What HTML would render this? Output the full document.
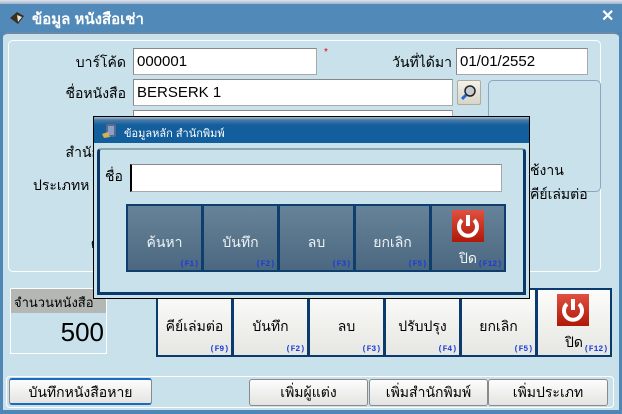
<!DOCTYPE html>
<html><head><meta charset="utf-8"><style>
*{box-sizing:border-box;margin:0;padding:0}
body{width:622px;height:414px;overflow:hidden;background:#4e86b6;font-family:"Liberation Sans","Noto Sans CJK SC","WenQuanYi Zen Hei",sans-serif;position:relative;font-size:14px;color:#000}
.a{position:absolute}
.inp{position:absolute;background:#fff;border:1px solid #a8a8a8;border-top-color:#888;border-left-color:#888;font-size:15px;padding:2px 3px;line-height:21px}
.lbl{position:absolute;font-size:14px;text-align:right}
.btn{position:absolute;background:linear-gradient(#fcfcfa,#e6e6e2);border:2px solid #0b3b6e;font-size:14px;text-align:center}
.fk{position:absolute;right:2px;bottom:1px;font-size:8px;font-weight:bold;color:#1a3cd8;font-family:"Liberation Mono",monospace}
.dbtn{position:absolute;top:204px;height:68px;background:linear-gradient(#668399,#4b6880);border:2px solid #0e3e6e;color:#eef3f6;text-align:center;font-size:14px}
.bb{position:absolute;top:379px;height:27px;background:linear-gradient(#fdfdfd,#e4e4e2);border:1px solid #8a8a8a;border-radius:3px;font-size:14px;text-align:center;line-height:25px}
</style></head><body>
<div class="a" style="left:0;top:0;width:622px;height:4px;background:linear-gradient(#dde4ee,#9fb4cc)"></div>
<div class="a" style="left:0;top:4px;width:622px;height:28px;background:#5189b9"></div>
<svg class="a" style="left:8px;top:10px" width="18" height="16"><path d="M2 8 L9 2 L16 6 L10 14 Z" fill="#3a3020"/><path d="M9 5 L14 7 L10 12 Z" fill="#e8e4d8"/></svg>
<div class="a" style="left:32px;top:7px;color:#fff;font-size:15px;font-weight:bold">ข้อมูล หนังสือเช่า</div>
<div class="a" style="left:601px;top:6px;color:#fff;font-size:16px;font-weight:bold">✕</div>
<div class="a" style="left:3px;top:32px;width:616px;height:378px;background:#c8e1ea;border-radius:5px 5px 0 0;border-top:2px solid #6a8aa8"></div>
<div class="a" style="left:8px;top:40px;width:593px;height:232px;border:1px solid #fff;border-radius:5px"></div>
<div class="lbl" style="left:40px;top:52px;width:86px">บาร์โค้ด</div>
<div class="inp" style="left:133px;top:48px;width:184px;height:27px">000001</div>
<div class="a" style="left:324px;top:47px;color:#e00;font-size:10px">*</div>
<div class="lbl" style="left:370px;top:52px;width:82px">วันที่ได้มา</div>
<div class="inp" style="left:456px;top:48px;width:132px;height:27px">01/01/2552</div>
<div class="lbl" style="left:40px;top:83px;width:86px">ชื่อหนังสือ</div>
<div class="inp" style="left:133px;top:79px;width:320px;height:27px">BERSERK 1</div>
<div class="a" style="left:457px;top:80px;width:24px;height:25px;background:linear-gradient(#f4f2ea,#d8d4c8);border:1px solid #b0ac9c;border-radius:2px"></div>
<svg class="a" style="left:460px;top:83px" width="18" height="18"><circle cx="10" cy="8" r="5" fill="#c8ccd0" stroke="#222" stroke-width="1.5"/><path d="M6 12 L2 16" stroke="#1a6adc" stroke-width="3"/></svg>
<div class="a" style="left:488px;top:80px;width:113px;height:112px;border:1px solid #8aa6c4;border-radius:5px"></div>
<div class="inp" style="left:133px;top:110px;width:320px;height:27px"></div>
<div class="lbl" style="left:30px;top:142px;width:70px">สำนัก</div>
<div class="lbl" style="left:10px;top:175px;width:90px;text-align:left;padding-left:23px;white-space:nowrap">ประเภทห</div>
<div class="lbl" style="left:80px;top:233px;width:20px">ค</div>
<div class="a" style="left:530px;top:160px;font-size:14px">ช้งาน</div>
<div class="a" style="left:530px;top:184px;font-size:14px">คีย์เล่มต่อ</div>
<div class="a" style="left:10px;top:288px;width:97px;height:66px;border:1px solid #fff;background:#c8e1ea"></div>
<div class="a" style="left:11px;top:289px;width:95px;height:24px;background:#b4b8b4;font-size:13px;padding:3px 3px;overflow:hidden;white-space:nowrap">จำนวนหนังสือ</div>
<div class="a" style="left:11px;top:314px;width:95px;height:40px;font-size:26px;text-align:right;padding-right:2px;line-height:36px">500</div>
<div class="btn" style="left:156px;top:288px;width:77px;height:69px;padding-top:26px">คีย์เล่มต่อ<span class="fk">(F9)</span></div>
<div class="btn" style="left:232px;top:288px;width:77px;height:69px;padding-top:26px">บันทึก<span class="fk">(F2)</span></div>
<div class="btn" style="left:308px;top:288px;width:77px;height:69px;padding-top:26px">ลบ<span class="fk">(F3)</span></div>
<div class="btn" style="left:384px;top:288px;width:77px;height:69px;padding-top:26px">ปรับปรุง<span class="fk">(F4)</span></div>
<div class="btn" style="left:460px;top:288px;width:77px;height:69px;padding-top:26px">ยกเลิก<span class="fk">(F5)</span></div>
<div class="btn" style="left:536px;top:288px;width:76px;height:69px;padding-top:42px">ปิด<span class="fk">(F12)</span>
<svg class="a" style="left:19px;top:4px" width="32" height="32"><defs><linearGradient id="r" x1="0" y1="0" x2="0" y2="1"><stop offset="0" stop-color="#e05040"/><stop offset="1" stop-color="#b01808"/></linearGradient></defs><rect width="32" height="32" fill="url(#r)"/><path d="M10 10 A9 9 0 1 0 22 10" fill="none" stroke="#fff" stroke-width="4"/><path d="M16 5 V16" stroke="#fff" stroke-width="4"/></svg></div>
<div class="a" style="left:6px;top:376px;width:608px;height:32px;border:1px solid #fff;border-radius:4px"></div>
<div class="bb" style="left:9px;top:378px;width:143px;border-top:2px solid #1a6ac0;border-bottom:2px solid #1a6ac0">บันทึกหนังสือหาย</div>
<div class="bb" style="left:249px;width:119px">เพิ่มผู้แต่ง</div>
<div class="bb" style="left:369px;width:119px">เพิ่มสำนักพิมพ์</div>
<div class="bb" style="left:488px;width:120px">เพิ่มประเภท</div>
<div class="a" style="left:93px;top:116px;width:437px;height:183px;border:1px solid #000;background:#c8e1ea"></div>
<div class="a" style="left:94px;top:117px;width:435px;height:26px;background:linear-gradient(#a8bccc 0,#4a7aa8 3px,#135e9c 8px,#135e9c)"></div>
<svg class="a" style="left:102px;top:123px" width="16" height="16"><rect x="4" y="1" width="10" height="13" rx="2" fill="#5a6a8a"/><rect x="6" y="3" width="6" height="9" fill="#8aa0c8"/><path d="M0 11 L6 9 L8 14 L2 15Z" fill="#d8b050"/></svg>
<div class="a" style="left:124px;top:124px;color:#fff;font-size:11px">ข้อมูลหลัก สำนักพิมพ์</div>
<div class="a" style="left:97px;top:148px;width:429px;height:147px;border:3px solid #0b3a6a;border-top:2px solid #8aa;border-radius:4px 4px 0 0"></div>
<div class="a" style="left:105px;top:166px;font-size:14px">ชื่อ</div>
<div class="inp" style="left:130px;top:164px;width:372px;height:28px;border-left:2px solid #000"></div>
<div class="dbtn" style="left:126px;width:77px;padding-top:26px">ค้นหา<span class="fk">(F1)</span></div>
<div class="dbtn" style="left:202px;width:77px;padding-top:26px">บันทึก<span class="fk">(F2)</span></div>
<div class="dbtn" style="left:278px;width:77px;padding-top:26px">ลบ<span class="fk">(F3)</span></div>
<div class="dbtn" style="left:354px;width:77px;padding-top:26px">ยกเลิก<span class="fk">(F5)</span></div>
<div class="dbtn" style="left:430px;width:76px;padding-top:42px">ปิด<span class="fk">(F12)</span>
<svg class="a" style="left:20px;top:4px" width="32" height="32"><rect width="32" height="32" fill="url(#r)"/><path d="M10 10 A9 9 0 1 0 22 10" fill="none" stroke="#fff" stroke-width="4"/><path d="M16 5 V16" stroke="#fff" stroke-width="4"/></svg></div>
</body></html>
